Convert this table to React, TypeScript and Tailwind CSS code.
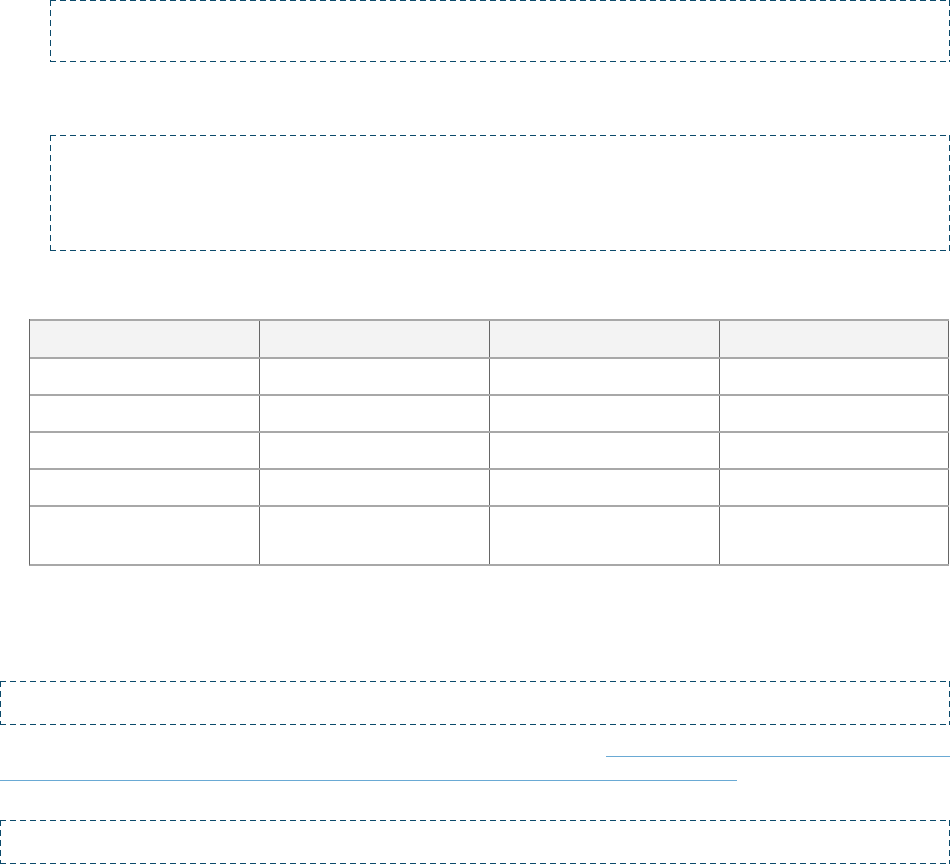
import React from "react";

const rows = [
  { h: "h-[36px]", head: true },
  { h: "h-[35px]" },
  { h: "h-[35px]" },
  { h: "h-[35px]" },
  { h: "h-[35px]" },
  { h: "h-[57px]" },
];

const dashed =
  "[background:repeating-linear-gradient(90deg,#0b4a6b_0_6px,transparent_6px_10px)_top_left/100%_1px_no-repeat,repeating-linear-gradient(90deg,#0b4a6b_0_6px,transparent_6px_10px)_bottom_left/100%_1px_no-repeat,repeating-linear-gradient(180deg,#0b4a6b_0_6px,transparent_6px_10px)_top_left/1px_100%_no-repeat,repeating-linear-gradient(180deg,#0b4a6b_0_6px,transparent_6px_10px)_top_right/1px_100%_no-repeat]";

export default function App() {
  return (
    <div className="w-[950px] bg-white" style={{ fontFamily: '"Liberation Sans", Arial, sans-serif' }}>
      <div className={`ml-[50px] h-[62px] ${dashed}`} />
      <div className={`ml-[50px] mt-[73px] h-[116px] ${dashed}`} />

      <div className="ml-[29px] mt-[68px] w-[920px] border-l border-[#666] border-b-2 border-b-[#a8a8a8]">
        {rows.map((r, i) => (
          <div key={i} className={`flex border-t-2 border-[#a8a8a8] ${r.head ? "bg-[#f3f3f3]" : "bg-white"}`}>
            <div className={`w-[230px] ${r.h} border-r border-[#666]`} />
            <div className={`w-[230px] ${r.h} border-r border-[#666]`} />
            <div className={`w-[230px] ${r.h} border-r border-[#666]`} />
            <div className={`w-[229px] ${r.h} border-r border-[#666]`} />
          </div>
        ))}
      </div>

      <div className={`mt-[115px] h-[44px] ${dashed}`} />

      <div className="mt-[31px] flex">
        <div className="w-[606px]" />
        <div className="flex-1 border-b border-[#6aaad4]" />
      </div>
      <div className="mt-[23px] w-[737px] border-b border-[#6aaad4]" />

      <div className={`mt-[39px] h-[44px] ${dashed}`} />
    </div>
  );
}
